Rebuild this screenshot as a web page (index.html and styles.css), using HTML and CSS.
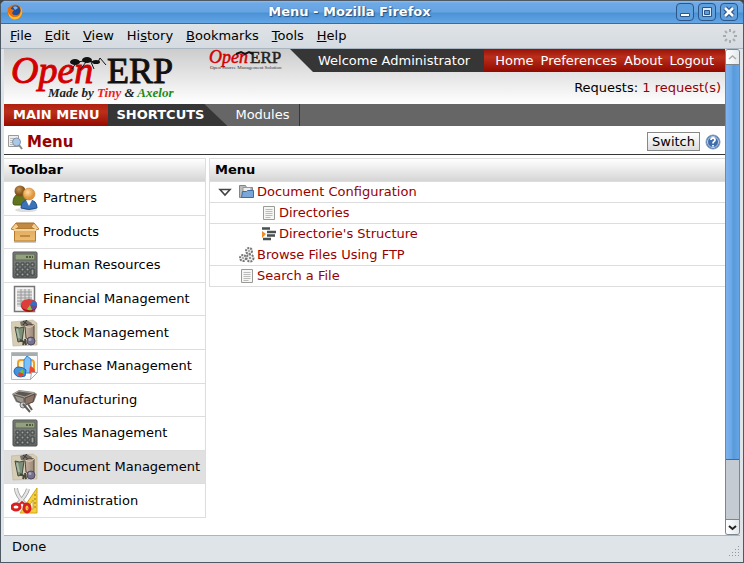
FILE: index.html
```html
<!DOCTYPE html>
<html lang="en">
<head>
<meta charset="utf-8">
<title>Menu - Mozilla Firefox</title>
<link rel="stylesheet" href="styles.css">
</head>
<body>
<svg class="defs" aria-hidden="true">
  <defs>
    <linearGradient id="metal" x2="0" y2="1"><stop stop-color="#858986"/><stop offset="1" stop-color="#5f6361"/></linearGradient>
    <linearGradient id="box" x2="0" y2="1"><stop stop-color="#e2ac5c"/><stop offset="1" stop-color="#eebd70"/></linearGradient>
    <radialGradient id="skin" cx=".4" cy=".35"><stop stop-color="#ffdba0"/><stop offset="1" stop-color="#e0953a"/></radialGradient>
    <radialGradient id="tan" cx=".4" cy=".35"><stop stop-color="#c89554"/><stop offset="1" stop-color="#7d4f18"/></radialGradient>
    <linearGradient id="cup" x2="1" y2="0"><stop stop-color="#c8b4a3"/><stop offset="1" stop-color="#9b8777"/></linearGradient>
    <symbol id="calc" viewBox="0 0 28 28">
      <rect x="2" y="1" width="24" height="26" rx="1" fill="url(#metal)" stroke="#4b4e4c"/>
      <rect x="4" y="3" width="20" height="6" fill="#93a17e" stroke="#5c6355"/>
      <path d="M15 6h7" stroke="#4c5c3c" stroke-width="2" stroke-dasharray="2 1"/>
      <path d="M5 12h3v3H5zM10 12h3v3h-3zM15 12h3v3h-3zM20 12h3v3h-3zM5 17h3v3H5zM10 17h3v3h-3zM15 17h3v3h-3zM5 22h3v3H5zM10 22h3v3h-3zM15 22h3v3h-3zM20 18h3v6h-3z" fill="#a0a3a1" stroke="#3d403e"/>
    </symbol>
    <symbol id="stock" viewBox="0 0 28 28">
      <path d="M0 3l22-2 4 3v22L2 27z" fill="#d6cdb4" stroke="#b9b09a" stroke-width=".6"/>
      <path d="M9 3l6-2 6 3-2 4-9-1z" fill="#77726a"/>
      <path d="M12 2l5 4M16 1l-4 5" stroke="#39372f"/>
      <path d="M4 8q5 2 9 0l-2 14-4 1z" fill="#7c8f7a" stroke="#414d41"/>
      <path d="M6 10l2 9" stroke="#a9b9a3" stroke-width="2"/>
      <path d="M14 7q5-3 9-1v13q-4 3-8 0z" fill="url(#cup)" stroke="#54483d"/>
      <path d="M14 7q5 3 9-1" fill="none" stroke="#e0cebd"/>
      <path d="M9 21l4 2-1 3M14 20l1 6" fill="none" stroke="#45453c" stroke-width="2"/>
      <circle cx="20" cy="22" r="4" fill="#77728c" stroke="#4e4960"/>
      <circle cx="19" cy="20.500" r="1.500" fill="#aeaac0"/>
    </symbol>
    <symbol id="page" viewBox="0 0 16 16">
      <path d="M2.500 1.500h11v13h-11z" fill="#f6f6f4" stroke="#999b96"/>
      <path d="M4.500 4.500h7M4.500 6.500h7M4.500 8.500h7M4.500 10.500h7M4.500 12.500h5" stroke="#bbb"/>
    </symbol>
  </defs>
</svg>
<div class="window">
  <header class="titlebar">
    <svg class="fox" viewBox="0 0 16 16" aria-hidden="true">
      <circle cx="8" cy="8" r="7.500" fill="#e26d0c"/>
      <circle cx="8.500" cy="6.500" r="5" fill="#244f98"/>
      <path d="M6 3q3-2 5 1l-3 2z" fill="#79b7e8"/>
      <path d="M1 3q0 9 7 10 5 0 6-5 1 7-6 7.500Q0 15 1 3z" fill="#ffc02d"/>
      <path d="M1 3l3 2 3 1-2 3q1 3 5 2-3 4-7 0Q0 8 1 3z" fill="#e86d13"/>
      <path d="M13 2q4 5 1 10-1-3 0-5z" fill="#f9b32b"/>
    </svg>
    <h1 class="window-title">Menu - Mozilla Firefox</h1>
    <div class="window-buttons">
      <button class="wbtn" aria-label="Minimize"><svg viewBox="1 1 16 16"><path d="M4.500 10.500h9v3h-9z" fill="#fff" stroke="#2c5688"/></svg></button>
      <button class="wbtn" aria-label="Maximize"><svg viewBox="1 1 16 16"><path d="M4.500 4.500h9v9h-9z" fill="#dcebf9" stroke="#2c5688"/><path d="M6.500 7.500h5v4h-5z" fill="#5b9fdd" stroke="#2c5688"/></svg></button>
      <button class="wbtn" aria-label="Close"><svg viewBox="1 1 16 16"><path d="M5 5l8 8M13 5l-8 8" stroke="#2c5688" stroke-width="5"/><path d="M5 5l8 8M13 5l-8 8" stroke="#fff" stroke-width="2.500"/></svg></button>
    </div>
  </header>
  <nav class="menubar" aria-label="Application">
    <button><u>F</u>ile</button><button><u>E</u>dit</button><button><u>V</u>iew</button><button>Hi<u>s</u>tory</button><button><u>B</u>ookmarks</button><button><u>T</u>ools</button><button><u>H</u>elp</button>
    <svg class="throbber" viewBox="0 0 16 16" aria-hidden="true"><path d="M8 1v3M8 12v3M1 8h3M12 8h3M3 3l2 2M11 11l2 2M3 13l2-2M11 5l2-2" stroke="#a9acaf" stroke-width="2"/></svg>
  </nav>
  <div class="viewport">
    <main class="page">
      <div class="banner">
        <svg class="logo" width="176" height="55" viewBox="0 0 176 55" role="img" aria-label="Open ERP">
          <text class="logo-open" x="7" y="34">Open</text>
          <text class="logo-erp" x="103" y="34">ERP</text>
          <text class="logo-tag" x="44" y="48">Made by <tspan class="tiny">Tiny</tspan> &amp; <tspan class="axelor">Axelor</tspan></text>
          <g fill="#111"><ellipse cx="71" cy="13" rx="5" ry="3"/><ellipse cx="83" cy="11" rx="5" ry="3"/><ellipse cx="92" cy="13" rx="4" ry="2"/></g>
          <path d="M70 14l9-2 15 1M72 14l-4 6M82 13l-6 8M87 13l3 7M94 13l2-4 6 7" fill="none" stroke="#111"/>
        </svg>
        <svg class="logo-small" width="80" height="22" viewBox="0 0 80 22" role="img" aria-label="Open ERP">
          <text class="small-open" x="1" y="14">Open</text>
          <text class="small-erp" x="42" y="14">ERP</text>
          <text class="small-tag" x="2" y="20">Open Source Management Solution</text>
          <path d="M28 5l5-2 4 2 4-2 4 2" fill="none" stroke="#111" stroke-width="2"/>
        </svg>
        <div class="account">
          <div class="welcome-row">
            <span class="welcome">Welcome Administrator</span>
            <nav class="user-links" aria-label="User"><a href="#">Home</a><a href="#">Preferences</a><a href="#">About</a><a href="#">Logout</a></nav>
          </div>
          <p class="requests">Requests: <a href="#">1 request(s)</a></p>
        </div>
      </div>
      <nav class="tabs" aria-label="Main">
        <a class="tab-main" href="#">MAIN MENU</a>
        <a class="tab-short" href="#">SHORTCUTS</a>
        <a class="tab-module" href="#">Modules</a>
      </nav>
      <div class="heading">
        <svg class="find" viewBox="0 0 16 16" aria-hidden="true"><path d="M.5 1.500h10v11H.5z" fill="#eee" stroke="#999"/><path d="M2 4.500h6M2 6.500h3M2 8.500h2M2 10.500h3" stroke="#bbb"/><circle cx="8.500" cy="8" r="4" fill="#a9c9ea" stroke="#8493a3"/><path d="M11 11l3 4" stroke="#888" stroke-width="2"/></svg>
        <h2>Menu</h2>
        <button class="switch">Switch</button>
        <button class="help" aria-label="Help"><svg viewBox="0 0 16 16"><circle cx="8" cy="8" r="7" fill="#3f6cab" stroke="#7d9bc4"/><circle cx="8" cy="8" r="5.500" fill="none" stroke="#c2d2e8"/><path d="M6 6q0-2 2-2t2 2q0 1-1 1.500T8 9.500M8 11v1.500" fill="none" stroke="#fff" stroke-width="1.800"/></svg></button>
      </div>
      <div class="columns">
        <section class="toolbar">
          <h3>Toolbar</h3>
          <ul>
            <li><a href="#"><svg viewBox="0 0 28 28"><ellipse cx="15" cy="26" rx="11" ry="2" fill="#ddd"/><path d="M2 19q0-8 6-9 6 0 8 7l-2 4H4q-2 0-2-2z" fill="#60761e" stroke="#45550d"/><circle cx="9" cy="7" r="5.500" fill="url(#tan)"/><path d="M10 24q0-8 8-8t8 8q-8 3-16 0z" fill="#3b73bb" stroke="#20538f"/><path d="M15 16l3 6 3-6" fill="#fff"/><circle cx="18" cy="10" r="6" fill="url(#skin)" stroke="#c88134" stroke-width=".5"/></svg>Partners</a></li>
            <li><a href="#"><svg viewBox="0 0 28 28"><path d="M3 23h22v2H3z" fill="#ccc"/><path d="M3.500 11h21v12h-21z" fill="url(#box)" stroke="#b37a2d"/><path d="M5 5h18l2 6H3z" fill="#c08a45" stroke="#a66c20"/><path d="M5 5L0 11l3 1 5-3zM23 5l5 6-3 1-5-3z" fill="#f5cf92" stroke="#b77d30"/><path d="M3 11h22v2H3z" fill="#f5d29a"/><path d="M9 18h10" stroke="#c08a45" stroke-width="2"/></svg>Products</a></li>
            <li><a href="#"><svg><use href="#calc"/></svg>Human Resources</a></li>
            <li><a href="#"><svg viewBox="0 0 28 28"><path d="M3.500 1.500h20v25h-20z" fill="#f6f6f6" stroke="#777" stroke-width="1.500"/><path d="M6 4h15v18H6z" fill="#ddd"/><path d="M6 7h15M6 10h15M6 13h15M6 16h15M6 19h15M10 4v18M14 4v18M18 4v12" stroke="#999"/><ellipse cx="18" cy="21" rx="8" ry="6" fill="#a31313"/><ellipse cx="18" cy="19.500" rx="8" ry="5.500" fill="#df3c3c"/><path d="M19 20l3-5q5 2 4 6z" fill="#3470bd"/><path d="M19 20l7 1q-2 4-5 4z" fill="#6a4b96"/><path d="M19 20l2 5q-4 1-5-1z" fill="#80c83c"/></svg>Financial Management</a></li>
            <li><a href="#"><svg><use href="#stock"/></svg>Stock Management</a></li>
            <li><a href="#"><svg viewBox="0 0 28 28"><path d="M.500.500h26v20l-7 7H.500z" fill="#f9f9f9" stroke="#b9bcbf"/><path d="M1 1h25v3H1z" fill="#a5adaf"/><rect x="7" y="8" width="16" height="12" rx="3" fill="#fff0c8" stroke="#eda02a" stroke-width="2"/><path d="M13 21V8l3-4 4 3v14z" fill="#7cc0fa" stroke="#2f83d2"/><path d="M3 20q0-5 5-5 4 0 7 3l-1 6q-9 3-11-4z" fill="#3f94df" stroke="#2162b1"/><path d="M8 20l4-3 1 5z" fill="#70c432"/><path d="M8 20l5 2-3 3-3-2z" fill="#ef3d24"/><path d="M18 21l1-7q6 2 5 8z" fill="#ef4630"/><path d="M19.500 27.500l1-7h6z" fill="#fff" stroke="#aaa"/></svg>Purchase Management</a></li>
            <li><a href="#"><svg viewBox="0 0 28 28"><path d="M1 8l7-4 15 2 3 2-3 8-9 3-9-3z" fill="#8a847e"/><path d="M3 8l5-3 15 2-9 4z" fill="#5c5752" stroke="#aaa298"/><path d="M14 12l10-4-2 8-8 3z" fill="#8c7567" stroke="#564b45"/><path d="M3 9l10 3v6l-7-3z" fill="#9c9991" stroke="#5b5854"/><circle cx="12" cy="19" r="3" fill="#ccc" stroke="#777"/><path d="M12 18l7 8M17 18l4 6" stroke="#615e5a" stroke-width="2"/></svg>Manufacturing</a></li>
            <li><a href="#"><svg><use href="#calc"/></svg>Sales Management</a></li>
            <li class="selected"><a href="#"><svg><use href="#stock"/></svg>Document Management</a></li>
            <li><a href="#"><svg viewBox="0 0 28 28"><path d="M9 26L26 1v25z" fill="#f5cf3d" stroke="#d0a51c"/><path d="M16 22l6-9v9z" fill="#fff" stroke="#c9a01c"/><path d="M23 8h2M23 12h2M23 16h2M23 20h2" stroke="#9c7a12"/><path d="M5 1q0 7 9 16M17 2q-2 7-11 16" fill="none" stroke="#999" stroke-width="4"/><path d="M5 1q0 7 9 16M17 2q-2 7-11 16" fill="none" stroke="#e5e5e5" stroke-width="2.500"/><ellipse cx="5" cy="20" rx="4" ry="3" fill="none" stroke="#d91f1f" stroke-width="3"/><ellipse cx="16" cy="21" rx="3" ry="4" fill="none" stroke="#d91f1f" stroke-width="3"/><path d="M8 18l3-3 4 3" fill="none" stroke="#d91f1f" stroke-width="2"/></svg>Administration</a></li>
          </ul>
        </section>
        <table class="tree">
          <thead><tr><th scope="col">Menu</th></tr></thead>
          <tbody>
            <tr><td><div class="node"><button class="expander" aria-label="Collapse"><svg viewBox="0 0 16 16"><path d="M3 5.500h10L8 11z" fill="#fff" stroke="#444" stroke-width="1.600"/></svg></button><svg viewBox="0 0 16 16"><path d="M.500 1.500h6l1 2h6v10H.500z" fill="#b9bcba" stroke="#828583"/><path d="M4 3.500h8v7H4z" fill="#eee" stroke="#999"/><path d="M3.500 7.500h4l1-1h6v7h-12z" fill="#79a7d8" stroke="#3f6ca2"/></svg><a href="#">Document Configuration</a></div></td></tr>
            <tr><td><div class="node child"><svg><use href="#page"/></svg><a href="#">Directories</a></div></td></tr>
            <tr class="joined"><td><div class="node child"><svg viewBox="0 0 16 16"><path d="M1 2.500h8M6 6h9M6 9.500h8M2 13h8" stroke="#4a4f4f" stroke-width="2.500"/><path d="M1 5l4 3-4 4z" fill="#f58b20"/></svg><a href="#">Directorie's Structure</a></div></td></tr>
            <tr><td><div class="node leaf"><svg viewBox="0 0 16 16"><g fill="#eee" stroke="#777"><circle cx="10" cy="4" r="3" stroke-width="2" stroke-dasharray="2 1"/><circle cx="4" cy="11" r="3" stroke-width="2" stroke-dasharray="2 1"/><circle cx="11" cy="11" r="3.500" stroke-width="2" stroke-dasharray="2 1"/></g><path d="M9 4h2M3 11h2M10 11h2M11 10v2" stroke="#777"/></svg><a href="#">Browse Files Using FTP</a></div></td></tr>
            <tr><td><div class="node leaf"><svg><use href="#page"/></svg><a href="#">Search a File</a></div></td></tr>
          </tbody>
        </table>
      </div>
    </main>
    <div class="scrollbar">
      <button class="arrow up" aria-label="Scroll up"><svg viewBox="0 0 13 13"><path d="M3 8l3.500-3L10 8" fill="none" stroke="#aaa" stroke-width="1.500"/></svg></button>
      <div class="track"><div class="thumb"></div></div>
      <button class="arrow down" aria-label="Scroll down"><svg viewBox="0 0 13 13"><path d="M3 5l3.500 3L10 5" fill="none" stroke="#222" stroke-width="2"/></svg></button>
    </div>
  </div>
  <footer class="status"><span>Done</span><svg class="grip" viewBox="0 0 12 12" aria-hidden="true"><path d="M10 1h1v1h-1zM10 4h1v1h-1zM7 4h1v1H7zM10 7h1v1h-1zM7 7h1v1H7zM4 7h1v1H4zM10 10h1v1h-1zM7 10h1v1H7zM4 10h1v1H4zM1 10h1v1H1z" fill="#8f989f"/></svg></footer>
</div>
</body>
</html>
```
FILE: styles.css
```css
* { box-sizing: border-box; }
body {
  margin: 0;
  background: #3f474e;
  color: #000;
  font: 13px/16px "DejaVu Sans", sans-serif;
}
h1, h2, h3, p, ul { margin: 0; padding: 0; }
button { margin: 0; padding: 0; border: 0; background: none; color: inherit; font: inherit; }
a { color: #900; text-decoration: none; }
svg { display: block; flex: none; }
.defs { position: absolute; width: 0; height: 0; }

.window {
  display: flex;
  flex-direction: column;
  height: 100vh;
  border: 1px solid #4e5963;
  border-radius: 6px 6px 0 0;
  background: #dfe4e8;
  overflow: hidden;
}
.titlebar {
  display: flex;
  align-items: center;
  flex: none;
  height: 23px;
  padding: 0 5px 0 6px;
  border-bottom: 1px solid #3a6ba5;
  background: linear-gradient(#8bbcf0 0, #6ea9e6 2px, #66a4e2 11px, #4b92d5 12px, #64a5e5 22px);
}
.fox { width: 16px; height: 16px; }
.window-title {
  flex: 1;
  color: #fff;
  font-size: 13px;
  line-height: 16px;
  text-align: center;
  text-shadow: 1px 1px 1px #245080, 0 0 1px #245080;
}
.window-buttons { display: flex; gap: 4px; }
.wbtn { width: 18px; height: 18px; border: 1px solid #2c5688; border-radius: 4px; background: #5e9fdd; }
.wbtn svg { width: 16px; height: 16px; }

.menubar {
  display: flex;
  align-items: center;
  gap: 13px;
  flex: none;
  height: 25px;
  padding: 0 5px 0 9px;
  border-bottom: 1px solid #a9b6c0;
  background: linear-gradient(#dfe3e6, #d5dbe1);
}
.throbber { width: 16px; height: 16px; margin-left: auto; }

.viewport { display: flex; flex: 1; min-height: 0; margin: 0 3px; }
.page { flex: 1; min-width: 0; overflow: hidden; background: #fff; }

.banner { display: flex; height: 55px; background: linear-gradient(#ccc, #fff); }
.logo-small { margin-left: 28px; }
.logo text, .logo-small text { font-family: "Liberation Serif", serif; }
.logo .logo-open { font-size: 38px; font-style: italic; fill: #d40000; stroke: #d40000; }
.logo .logo-erp { font-size: 36px; fill: #111; stroke: #111; }
.logo .logo-tag { font-size: 13px; font-weight: bold; font-style: italic; fill: #222; }
.logo .tiny { fill: #e22; }
.logo .axelor { fill: #1b8a1b; }
.small-open { font-size: 18px; font-style: italic; fill: #d40000; stroke: #d40000; stroke-width: .5px; }
.small-erp { font-size: 17px; fill: #222; stroke: #222; stroke-width: .5px; }
.small-tag { font-size: 5px; fill: #333; }
.account { flex: 1; }
.welcome-row { display: flex; height: 23px; margin-left: 2px; line-height: 23px; }
.welcome {
  flex: 1;
  padding-left: 28px;
  background: #363636;
  color: #fff;
  white-space: nowrap;
  clip-path: polygon(0 0, 100% 0, 100% 100%, 23px 100%);
}
.user-links {
  display: flex;
  gap: 7px;
  padding: 0 11px;
  background: linear-gradient(#961208, #bb2f1b 8px, #900900);
}
.user-links a { color: #fff; }
.requests { padding: 8px 4px 0 0; text-align: right; }

.tabs { display: flex; height: 22px; background: #666; line-height: 21px; }
.tabs a { color: #fff; }
.tab-main, .tab-short { padding: 0 9px; font-weight: bold; }
.tab-main { padding-right: 8px; background: linear-gradient(#b02010, #bb2f1b 8px, #960b00); }
.tab-short { padding-right: 23px; background: #363636; clip-path: polygon(0 0, calc(100% - 23px) 0, 100% 100%, 0 100%); }
.tab-module { padding: 0 10px 0 8px; border-right: 1px solid #363636; color: #eee; }

.heading { display: flex; align-items: center; height: 29px; padding: 3px 4px 0 4px; border-bottom: 1px solid #363636; }
.find { width: 16px; height: 16px; }
.heading h2 { flex: 1; padding-left: 3px; color: #900; font-size: 15px; line-height: 18px; }
.switch { height: 19px; padding: 0 4px; border: 1px solid #888; background: linear-gradient(#fff, #ddd); line-height: 17px; }
.help { margin-left: 5px; }
.help svg { width: 16px; height: 16px; }

.columns { display: flex; align-items: flex-start; gap: 3px; padding-top: 3px; }
.toolbar { width: 202px; flex: none; border: solid #ddd; border-width: 1px 1px 0 0; }
.toolbar h3, .tree th {
  height: 23px;
  padding: 0 5px;
  border-bottom: 1px solid #ddd;
  background: linear-gradient(#fff, #d5d5d5);
  font-size: 13px;
  line-height: 22px;
  text-align: left;
}
.toolbar ul { display: grid; grid-auto-rows: 1fr; height: 336px; list-style: none; }
.toolbar li { border-bottom: 1px solid #ddd; }
.toolbar li.selected { background: #e0e0e0; }
.toolbar a { display: flex; align-items: center; gap: 4px; height: 100%; padding-left: 7px; color: #000; white-space: nowrap; }
.toolbar svg { width: 28px; height: 28px; }

.tree { flex: 1; display: block; border: solid #ddd; border-width: 1px 0 0 1px; border-spacing: 0; }
.tree thead, .tree tbody, .tree tr, .tree th, .tree td { display: block; }
.tree td { height: 21px; padding: 0; border-bottom: 1px solid #ddd; }
.tree .joined td { border-bottom-color: transparent; }
.node { display: flex; align-items: center; gap: 2px; height: 20px; padding-left: 7px; }
.node.child { padding-left: 51px; }
.node.leaf { padding-left: 29px; }
.node svg { width: 16px; height: 16px; }
.node .expander { margin-right: 4px; }

.scrollbar { display: flex; flex-direction: column; width: 15px; flex: none; border: 1px solid #7a8791; border-radius: 3px; background: #c4cbd2; overflow: hidden; }
.arrow { height: 14px; flex: none; background: linear-gradient(90deg, #fff, #e4e8eb); }
.arrow svg { width: 13px; height: 13px; }
.track { flex: 1; border: solid #7a8791; border-width: 1px 0; }
.thumb { height: 87%; border-bottom: 1px solid #3a6ba5; background: linear-gradient(90deg, #7db3ee, #69a6e6 6px, #579ad9 7px, #64a5e5); }

.status {
  display: flex;
  align-items: flex-start;
  justify-content: space-between;
  height: 27px;
  flex: none;
  margin: 0 3px;
  padding: 3px 0 0 8px;
  border-top: 1px solid #a9b6c0;
}
.grip { width: 12px; height: 12px; align-self: flex-end; margin-bottom: 5px; }
```
